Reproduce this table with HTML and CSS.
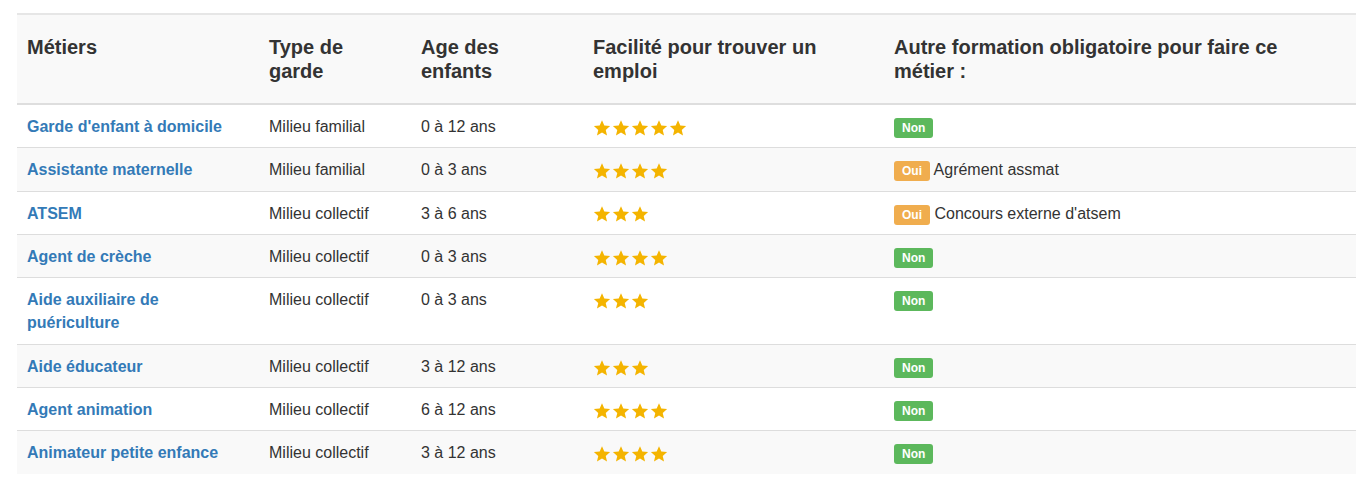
FILE: index.html
```html
<!DOCTYPE html>
<html lang="fr">
<head>
<meta charset="utf-8">
<title>Métiers de la petite enfance</title>
<link rel="stylesheet" href="styles.css">
</head>
<body>
<svg width="0" height="0" class="defs" aria-hidden="true">
  <defs>
    <symbol id="star" viewBox="0 0 24 24">
      <path d="M12 1.6l3.1 7.1 7.7.7-5.8 5.1 1.7 7.6L12 18.1l-6.7 4 1.7-7.6-5.8-5.1 7.7-.7z"/>
    </symbol>
  </defs>
</svg>
<div class="page">
  <table class="jobs">
    <colgroup>
      <col class="c1"><col class="c2"><col class="c3"><col class="c4"><col class="c5">
    </colgroup>
    <thead>
      <tr>
        <th>Métiers</th>
        <th>Type de<br>garde</th>
        <th>Age des<br>enfants</th>
        <th>Facilité pour trouver un<br>emploi</th>
        <th>Autre formation obligatoire pour faire ce<br>métier :</th>
      </tr>
    </thead>
    <tbody>
      <tr>
        <td><a href="#">Garde d'enfant à domicile</a></td>
        <td>Milieu familial</td>
        <td>0 à 12 ans</td>
        <td><span class="stars"><svg><use href="#star"/></svg><svg><use href="#star"/></svg><svg><use href="#star"/></svg><svg><use href="#star"/></svg><svg><use href="#star"/></svg></span></td>
        <td><span class="label label-non">Non</span></td>
      </tr>
      <tr>
        <td><a href="#">Assistante maternelle</a></td>
        <td>Milieu familial</td>
        <td>0 à 3 ans</td>
        <td><span class="stars"><svg><use href="#star"/></svg><svg><use href="#star"/></svg><svg><use href="#star"/></svg><svg><use href="#star"/></svg></span></td>
        <td><span class="label label-oui">Oui</span> Agrément assmat</td>
      </tr>
      <tr>
        <td><a href="#">ATSEM</a></td>
        <td>Milieu collectif</td>
        <td>3 à 6 ans</td>
        <td><span class="stars"><svg><use href="#star"/></svg><svg><use href="#star"/></svg><svg><use href="#star"/></svg></span></td>
        <td><span class="label label-oui">Oui</span> Concours externe d'atsem</td>
      </tr>
      <tr>
        <td><a href="#">Agent de crèche</a></td>
        <td>Milieu collectif</td>
        <td>0 à 3 ans</td>
        <td><span class="stars"><svg><use href="#star"/></svg><svg><use href="#star"/></svg><svg><use href="#star"/></svg><svg><use href="#star"/></svg></span></td>
        <td><span class="label label-non">Non</span></td>
      </tr>
      <tr>
        <td><a href="#">Aide auxiliaire de puériculture</a></td>
        <td>Milieu collectif</td>
        <td>0 à 3 ans</td>
        <td><span class="stars"><svg><use href="#star"/></svg><svg><use href="#star"/></svg><svg><use href="#star"/></svg></span></td>
        <td><span class="label label-non">Non</span></td>
      </tr>
      <tr>
        <td><a href="#">Aide éducateur</a></td>
        <td>Milieu collectif</td>
        <td>3 à 12 ans</td>
        <td><span class="stars"><svg><use href="#star"/></svg><svg><use href="#star"/></svg><svg><use href="#star"/></svg></span></td>
        <td><span class="label label-non">Non</span></td>
      </tr>
      <tr>
        <td><a href="#">Agent animation</a></td>
        <td>Milieu collectif</td>
        <td>6 à 12 ans</td>
        <td><span class="stars"><svg><use href="#star"/></svg><svg><use href="#star"/></svg><svg><use href="#star"/></svg><svg><use href="#star"/></svg></span></td>
        <td><span class="label label-non">Non</span></td>
      </tr>
      <tr>
        <td><a href="#">Animateur petite enfance</a></td>
        <td>Milieu collectif</td>
        <td>3 à 12 ans</td>
        <td><span class="stars"><svg><use href="#star"/></svg><svg><use href="#star"/></svg><svg><use href="#star"/></svg><svg><use href="#star"/></svg></span></td>
        <td><span class="label label-non">Non</span></td>
      </tr>
    </tbody>
  </table>
</div>
</body>
</html>
```

FILE: styles.css
```css
html, body {
  margin: 0;
  padding: 0;
  background: #fff;
}
body {
  font-family: "Liberation Sans", Arial, Helvetica, sans-serif;
  font-size: 16px;
  line-height: 23.3px;
  color: #333;
}
.defs {
  position: absolute;
  width: 0;
  height: 0;
  overflow: hidden;
}
.page {
  padding: 13px 9px 0 17px;
}
.jobs {
  width: 1339px;
  border-collapse: collapse;
  border-spacing: 0;
  table-layout: fixed;
}
.c1 { width: 242px; }
.c2 { width: 152px; }
.c3 { width: 172px; }
.c4 { width: 301px; }
.c5 { width: 472px; }

.jobs th {
  text-align: left;
  vertical-align: top;
  font-size: 20px;
  line-height: 24px;
  font-weight: bold;
  color: #333;
  padding: 20px 10px 20px 10px;
  background: #f9f9f9;
  border-top: 2px solid #e6e6e6;
  border-bottom: 2px solid #dedede;
}
.jobs td {
  padding: 10px 10px 9px 10px;
  vertical-align: top;
  border-top: 1px solid #ddd;
}
.jobs tbody tr:first-child td {
  border-top: 0;
}
.jobs tbody tr:nth-child(even) td {
  background: #f9f9f9;
}
.jobs a {
  color: #337ab7;
  font-weight: bold;
  text-decoration: none;
}

.stars {
  display: inline-flex;
  gap: 1px;
  vertical-align: middle;
}
.stars svg {
  width: 18px;
  height: 18px;
  fill: #f4b400;
}

.label {
  display: inline-block;
  font-size: 12px;
  font-weight: bold;
  line-height: 1;
  color: #fff;
  padding: 4px 8px 4px 8px;
  border-radius: 3px;
  vertical-align: 0;
}
.label-non { background: #5cb85c; }
.label-oui { background: #f0ad4e; }
```
